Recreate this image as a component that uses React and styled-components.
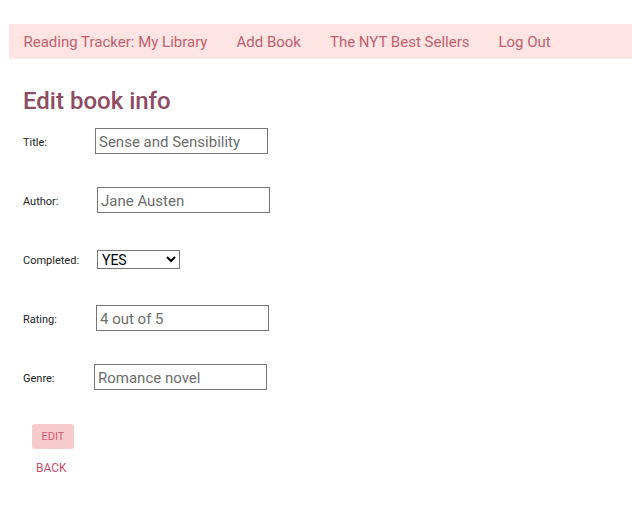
import React from "react";
import styled, { createGlobalStyle } from "styled-components";

const GlobalStyle = createGlobalStyle`
  body {
    margin: 0;
    background: #ffffff;
    font-family: Roboto, "Helvetica Neue", Arial, sans-serif;
  }
`;

const Page = styled.div`
  padding: 24px 0 0 9px;
`;

const Nav = styled.nav`
  display: flex;
  align-items: center;
  height: 35px;
  background: #ffe4e4;
`;

const NavLink = styled.a`
  padding: 0 14.5px;
  font-size: 15px;
  color: #c0616f;
  text-decoration: none;
  white-space: nowrap;
`;

const Main = styled.main`
  padding-left: 14px;
`;

const Heading = styled.h1`
  margin: 27px 0 12px;
  font-size: 24px;
  font-weight: 500;
  line-height: 30px;
  color: #8e4c62;
`;

const Form = styled.form`
  display: flex;
  flex-direction: column;
  gap: 33px;
`;

const Row = styled.div`
  display: flex;
  align-items: center;
  height: 26px;
`;

const Label = styled.label`
  width: 72px;
  font-size: 11px;
  color: #222222;
  padding-top: 2px;
`;

const TextInput = styled.input`
  box-sizing: border-box;
  width: 173px;
  height: 26px;
  margin-left: ${(p) => p.$offset || 0}px;
  padding: 1px 3px 0;
  border: 1px solid #767676;
  border-radius: 0;
  font-family: inherit;
  font-size: 15px;
  color: #6d6d6d;
  outline: none;
`;

const Select = styled.select`
  box-sizing: border-box;
  width: 83px;
  height: 19px;
  margin-left: ${(p) => p.$offset || 0}px;
  padding: 0;
  border: 1px solid #767676;
  border-radius: 0;
  background: #ffffff;
  font-family: inherit;
  font-size: 14px;
  color: #000000;
`;

const Actions = styled.div`
  display: flex;
  flex-direction: column;
  align-items: flex-start;
  margin: 34px 0 0 9px;
`;

const EditButton = styled.button`
  width: 42px;
  height: 25px;
  padding: 0;
  border: none;
  border-radius: 3px;
  background: #f7cbcd;
  font-family: inherit;
  font-size: 11px;
  color: #cf5d72;
`;

const BackLink = styled.a`
  margin: 12px 0 0 4px;
  font-size: 12px;
  color: #d24f6b;
  text-decoration: none;
`;

const fields = [
  { label: "Title:", value: "Sense and Sensibility", offset: 0 },
  { label: "Author:", value: "Jane Austen", offset: 2 },
  { label: "Completed:", select: true, offset: 2 },
  { label: "Rating:", value: "4 out of 5", offset: 1 },
  { label: "Genre:", value: "Romance novel", offset: -1 },
];

const App = () => (
  <Page>
    <GlobalStyle />
    <Nav>
      <NavLink href="#">Reading Tracker: My Library</NavLink>
      <NavLink href="#">Add Book</NavLink>
      <NavLink href="#">The NYT Best Sellers</NavLink>
      <NavLink href="#">Log Out</NavLink>
    </Nav>
    <Main>
      <Heading>Edit book info</Heading>
      <Form>
        {fields.map((f) => (
          <Row key={f.label}>
            <Label>{f.label}</Label>
            {f.select ? (
              <Select $offset={f.offset} defaultValue="YES">
                <option>YES</option>
                <option>NO</option>
              </Select>
            ) : (
              <TextInput $offset={f.offset} defaultValue={f.value} />
            )}
          </Row>
        ))}
      </Form>
      <Actions>
        <EditButton type="button">EDIT</EditButton>
        <BackLink href="#">BACK</BackLink>
      </Actions>
    </Main>
  </Page>
);

export default App;
